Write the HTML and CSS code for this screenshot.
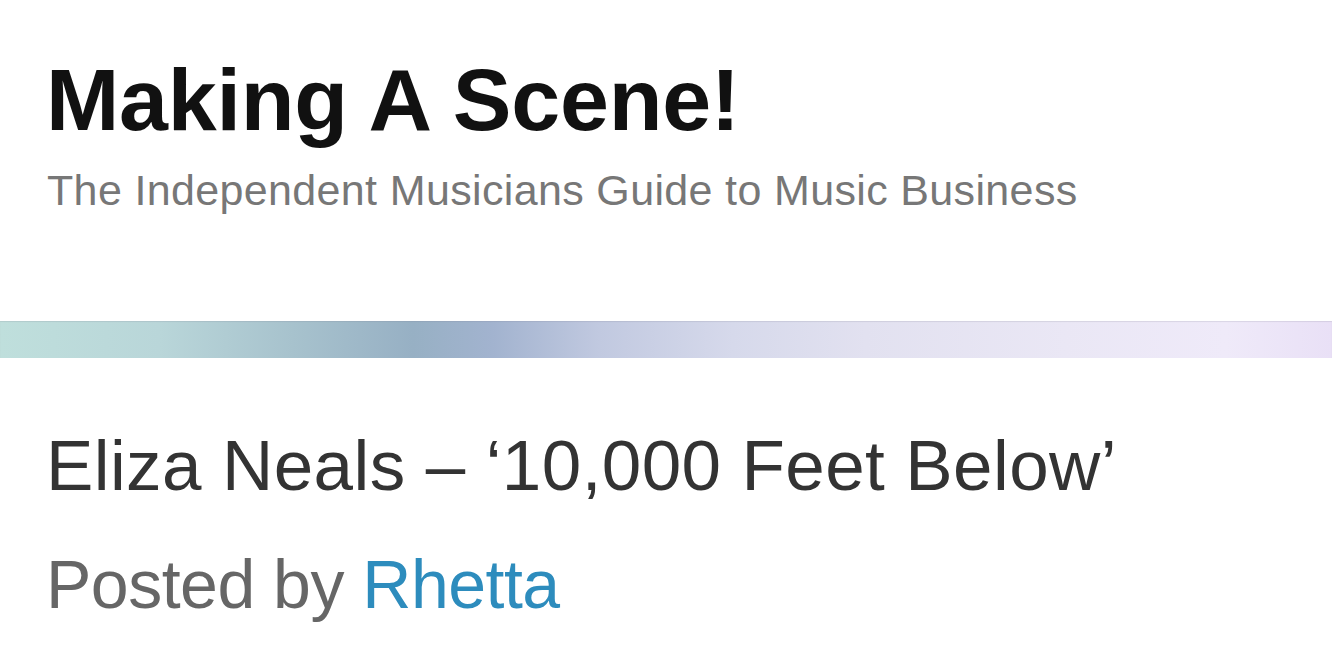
FILE: index.html
```html
<!DOCTYPE html>
<html lang="en">
<head>
<meta charset="utf-8">
<title>Making A Scene!</title>
<link rel="stylesheet" href="styles.css">
</head>
<body>
<header class="site-header">
  <h1 class="site-title">Making A Scene!</h1>
  <p class="site-tagline">The Independent Musicians Guide to Music Business</p>
</header>
<div class="band"></div>
<article class="post">
  <h2 class="post-title">Eliza Neals – ‘10,000 Feet Below’</h2>
  <p class="post-meta">Posted by <a class="author" href="#">Rhetta</a></p>
</article>
</body>
</html>
```
FILE: styles.css
```css
html, body {
  margin: 0;
  padding: 0;
  background: #ffffff;
}
body {
  font-family: "Liberation Sans", Arial, Helvetica, sans-serif;
  overflow: hidden;
}
.site-header {
  padding: 52px 46px 0 46px;
  height: 263px;
  box-sizing: border-box;
}
.site-title {
  margin: 0;
  font-size: 88px;
  line-height: 96px;
  font-weight: 700;
  color: #111111;
  letter-spacing: -0.25px;
}
.site-tagline {
  margin: 18px 0 0 1px;
  font-size: 43px;
  line-height: 48px;
  color: #777777;
  letter-spacing: 0.35px;
}
.band {
  height: 37px;
  margin-top: 58px;
  background: linear-gradient(90deg,
    #bfdfdc 0%,
    #b9d6d9 12%,
    #a7c2cd 22%,
    #97b0c4 31%,
    #a2b3cf 37%,
    #c1c9e0 45%,
    #d6d9eb 55%,
    #e2e1f0 65%,
    #eae7f5 80%,
    #efeaf9 92%,
    #e9e0f6 100%);
  box-shadow: inset 0 1px 1px rgba(120,120,140,0.18);
}
.post {
  padding: 68px 46px 0 46px;
}
.post-title {
  margin: 0;
  font-size: 71px;
  line-height: 80px;
  font-weight: 400;
  color: #333333;
  letter-spacing: 0.4px;
}
.post-meta {
  margin: 38px 0 0 0;
  font-size: 68px;
  line-height: 80px;
  color: #666666;
  letter-spacing: -0.5px;
}
.author {
  color: #2d8cbd;
  text-decoration: none;
}
```
